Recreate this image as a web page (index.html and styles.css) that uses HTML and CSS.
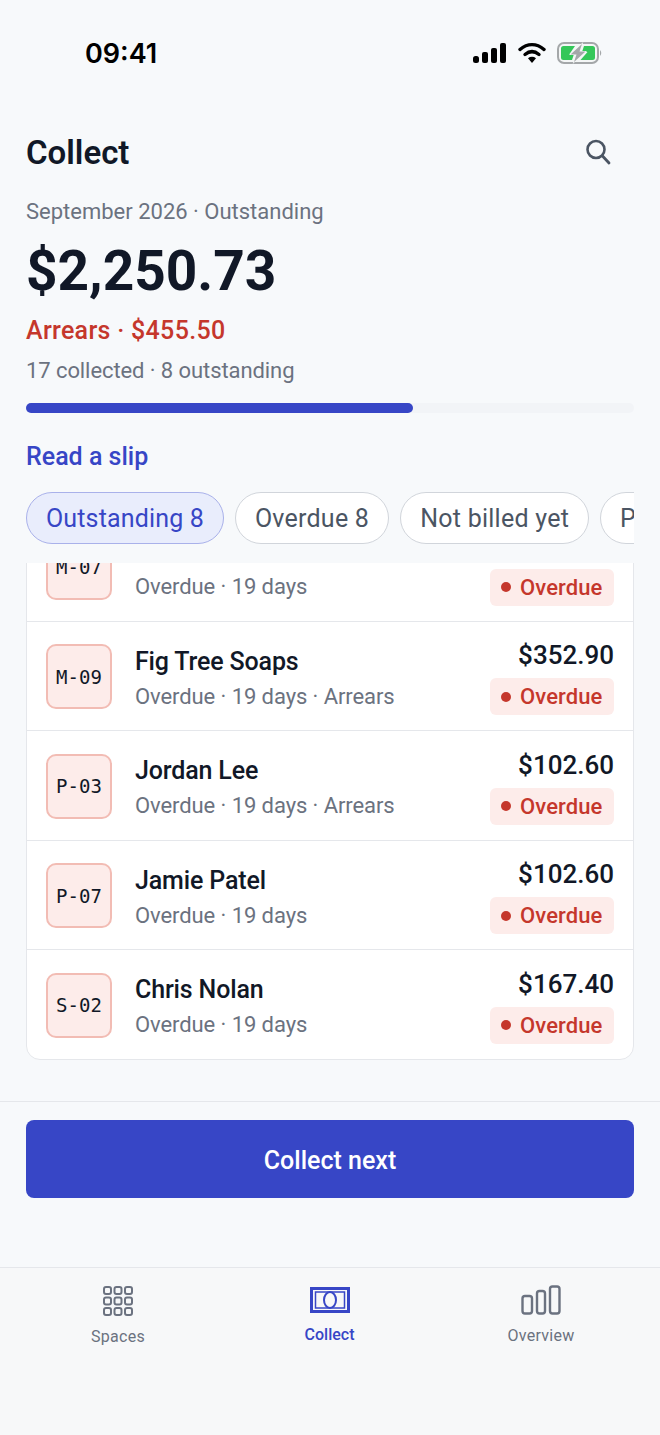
FILE: index.html

```html
<!DOCTYPE html>
<html lang="en">
<head>
    <meta charset="UTF-8">
    <meta name="viewport" content="width=device-width, initial-scale=1.0">
    <title>Collect</title>
    <link rel="stylesheet" href="styles.css">
</head>
<body>
<div class="screen">
    <div class="status">
        <span class="time">09:41</span>
        <div class="status-icons">
            <svg width="34" height="20" viewBox="0 0 34 20"><rect x="0" y="13" width="6" height="7" rx="2.5" fill="#000"/><rect x="9" y="9" width="6" height="11" rx="2" fill="#000"/><rect x="18" y="5" width="6" height="15" rx="2" fill="#000"/><rect x="27" y="0" width="6" height="20" rx="2" fill="#000"/></svg>
            <svg width="28" height="22" viewBox="0 0 28 22"><path d="M2 7.5C9.500 1 18.500 1 26 7.500" fill="none" stroke="#000" stroke-width="3.400" stroke-linecap="round"/><path d="M7 12.500C11.500 8.800 16.500 8.800 21 12.500" fill="none" stroke="#000" stroke-width="3.400" stroke-linecap="round"/><path d="M10 16.200L14 21 18 16.200C15.500 14.400 12.500 14.400 10 16.200Z" fill="#000"/></svg>
            <svg width="46" height="22" viewBox="0 0 46 22"><rect x="1" y="1" width="40" height="20" rx="6" fill="#f4f6f6" stroke="#a4a7a9" stroke-width="2"/><path d="M4 6.500Q4 4 6.500 4H18L12.500 12H17L15 18H6.500Q4 18 4 15.500Z" fill="#34c759"/><path d="M38 6.500Q38 4 35.500 4H27L25 10H30.500L23.500 18H35.500Q38 18 38 15.500Z" fill="#34c759"/><path d="M25 2L13.500 12.500H19.500L17 20L28.500 9.500H22.500Z" fill="#a4a7a9" stroke="#f4f6f6" stroke-width="1.200" paint-order="stroke"/><path d="M43 8Q45.500 11 43 14Z" fill="#a4a7a9"/></svg>
        </div>
    </div>

    <header class="head">
        <div class="title-row">
            <h1>Collect</h1>
            <svg class="search" width="28" height="28" viewBox="0 0 28 28"><circle cx="12" cy="11.500" r="8.500" fill="none" stroke="#4b5563" stroke-width="2.600"/><path d="M18.500 18L25 25" stroke="#4b5563" stroke-width="2.800" stroke-linecap="round"/></svg>
        </div>
        <p class="period">September 2026 · Outstanding</p>
        <p class="total">$2,250.73</p>
        <p class="arrears">Arrears · $455.50</p>
        <p class="counts">17 collected · 8 outstanding</p>
        <div class="progress"><div class="progress-fill" style="width: 63.7%"></div></div>
        <a class="slip-link">Read a slip</a>
        <div class="filters">
            <span class="filter active">Outstanding 8</span>
            <span class="filter">Overdue 8</span>
            <span class="filter">Not billed yet</span>
            <span class="filter">Paid 17</span>
        </div>
    </header>

    <div class="list-wrap">
        <div class="card">
            <div class="row">
                <div class="code"><span>M-07</span></div>
                <div class="info"><div class="name"></div><div class="sub">Overdue · 19 days</div></div>
                <div class="right"><div class="amount"></div><div class="badge"><i></i>Overdue</div></div>
            </div>
            <div class="row">
                <div class="code"><span>M-09</span></div>
                <div class="info"><div class="name">Fig Tree Soaps</div><div class="sub">Overdue · 19 days · Arrears</div></div>
                <div class="right"><div class="amount">$352.90</div><div class="badge"><i></i>Overdue</div></div>
            </div>
            <div class="row">
                <div class="code"><span>P-03</span></div>
                <div class="info"><div class="name">Jordan Lee</div><div class="sub">Overdue · 19 days · Arrears</div></div>
                <div class="right"><div class="amount">$102.60</div><div class="badge"><i></i>Overdue</div></div>
            </div>
            <div class="row">
                <div class="code"><span>P-07</span></div>
                <div class="info"><div class="name">Jamie Patel</div><div class="sub">Overdue · 19 days</div></div>
                <div class="right"><div class="amount">$102.60</div><div class="badge"><i></i>Overdue</div></div>
            </div>
            <div class="row">
                <div class="code"><span>S-02</span></div>
                <div class="info"><div class="name">Chris Nolan</div><div class="sub">Overdue · 19 days</div></div>
                <div class="right"><div class="amount">$167.40</div><div class="badge"><i></i>Overdue</div></div>
            </div>
        </div>
    </div>

    <div class="action">
        <button class="collect-btn">Collect next</button>
    </div>

    <nav class="tabs">
        <div class="tab">
            <svg width="32" height="32" viewBox="0 0 32 32" fill="none" stroke="#6b7280" stroke-width="2"><rect x="2" y="2" width="7" height="7" rx="2"/><rect x="12.500" y="2" width="7" height="7" rx="2"/><rect x="23" y="2" width="7" height="7" rx="2"/><rect x="2" y="12.500" width="7" height="7" rx="2"/><rect x="12.500" y="12.500" width="7" height="7" rx="2"/><rect x="23" y="12.500" width="7" height="7" rx="2"/><rect x="2" y="23" width="7" height="7" rx="2"/><rect x="12.500" y="23" width="7" height="7" rx="2"/><rect x="23" y="23" width="7" height="7" rx="2"/></svg>
            <span>Spaces</span>
        </div>
        <div class="tab current">
            <svg width="40" height="26" viewBox="0 0 40 26" fill="none" stroke="#3746c6"><rect x="1.500" y="1.500" width="37" height="23" stroke-width="3"/><rect x="5.500" y="5" width="29" height="16" stroke-width="1.500"/><ellipse cx="20" cy="13" rx="6" ry="8" stroke-width="2"/></svg>
            <span>Collect</span>
        </div>
        <div class="tab">
            <svg width="40" height="31" viewBox="0 0 40 31" fill="none" stroke="#6b7280" stroke-width="2.400"><rect x="1.500" y="11" width="9.500" height="17.500" rx="2.500"/><rect x="16" y="6" width="8" height="22.500" rx="2.500"/><rect x="29" y="1.500" width="9.500" height="27" rx="2.500"/></svg>
            <span>Overview</span>
        </div>
    </nav>
</div>
</body>
</html>
```

FILE: styles.css

```css
* {
    box-sizing: border-box;
}

html, body {
    margin: 0;
    padding: 0;
}

body {
    font-family: Roboto, "Liberation Sans", sans-serif;
    background-color: #f7f9fb;
    color: #111827;
}

.screen {
    width: 660px;
    height: 1435px;
    overflow: hidden;
    display: flex;
    flex-direction: column;
}

/* status bar */
.status {
    height: 106px;
    flex: none;
    padding: 38px 57px 0 85px;
    display: flex;
    justify-content: space-between;
    align-items: flex-start;
}

.time {
    font-family: Inter, sans-serif;
    font-size: 27px;
    font-weight: 600;
    line-height: 32px;
    color: #000;
}

.status-icons {
    display: flex;
    align-items: center;
    gap: 11px;
    padding-top: 4px;
}

/* header */
.head {
    flex: none;
    padding: 0 26px;
}

.title-row {
    display: flex;
    justify-content: space-between;
    align-items: center;
    height: 92px;
    padding-right: 22px;
}

h1 {
    margin: 0;
    font-size: 33px;
    font-weight: 600;
    color: #111827;
}

.head p {
    margin: 0;
}

.period {
    font-size: 22px;
    line-height: 28px;
    color: #6b7280;
}

.head .total {
    font-size: 55px;
    font-weight: 700;
    line-height: 64px;
    margin-top: 13px;
}

.head .arrears {
    font-size: 25px;
    font-weight: 500;
    line-height: 30px;
    letter-spacing: 0.3px;
    color: #c5372c;
    margin-top: 13px;
}

.head .counts {
    font-size: 22px;
    line-height: 28px;
    letter-spacing: -0.08px;
    color: #6b7280;
    margin-top: 11px;
}

.progress {
    height: 10px;
    border-radius: 5px;
    background-color: #f2f4f7;
    margin-top: 18px;
}

.progress-fill {
    height: 100%;
    border-radius: 5px;
    background-color: #3746c6;
}

.slip-link {
    display: block;
    font-size: 25px;
    font-weight: 500;
    line-height: 30px;
    color: #3746c6;
    margin-top: 29px;
}

.filters {
    display: flex;
    gap: 11px;
    overflow: hidden;
    margin-top: 20px;
}

.filter {
    flex: none;
    height: 52px;
    line-height: 51px;
    padding: 0 19px;
    border: 1.500px solid #d1d5db;
    border-radius: 26px;
    background-color: #fff;
    font-size: 25px;
    color: #4b5563;
    letter-spacing: 0.25px;
}

.filter.active {
    background-color: #e9edfc;
    border-color: #a9b1ea;
    color: #3746c6;
    letter-spacing: 0.15px;
}

/* list */
.list-wrap {
    flex: none;
    height: 538px;
    margin: 19px 26px 0;
    overflow: hidden;
}

.card {
    margin-top: -52px;
    background-color: #fff;
    border: 1.500px solid #e5e7eb;
    border-radius: 14px;
}

.row {
    height: 109.500px;
    padding: 1.500px 19px 0;
    display: flex;
    align-items: center;
    border-bottom: 1.500px solid #e5e7eb;
}

.row:last-child {
    height: 108.500px;
    border-bottom: none;
}

.code {
    width: 66px;
    height: 65px;
    flex: none;
    display: flex;
    align-items: center;
    justify-content: center;
    border: 2px solid #f2bcb4;
    border-radius: 10px;
    background-color: #fdecea;
    font-family: "DejaVu Sans Mono", "Liberation Mono", monospace;
    font-size: 19px;
    color: #111827;
}

.info {
    flex: 1;
    margin-left: 23px;
    padding-top: 3px;
}

.name {
    font-size: 25px;
    font-weight: 500;
    line-height: 32px;
    min-height: 32px;
    letter-spacing: -0.15px;
}

.sub {
    font-size: 22px;
    line-height: 28px;
    letter-spacing: -0.08px;
    margin-top: 5px;
    color: #6b7280;
}

.right {
    display: flex;
    flex-direction: column;
    align-items: flex-end;
    gap: 7px;
}

.amount {
    font-size: 26px;
    font-weight: 500;
    line-height: 32px;
    min-height: 33px;
    padding-top: 1px;
}

.badge {
    height: 37px;
    width: 124px;
    display: flex;
    align-items: center;
    gap: 9px;
    padding-left: 11px;
    border-radius: 6px;
    background-color: #fdecea;
    font-size: 22px;
    font-weight: 500;
    letter-spacing: 0.1px;
    color: #c5372c;
}

.badge i {
    width: 10px;
    height: 10px;
    border-radius: 50%;
    background-color: #c5372c;
}

/* bottom button */
.action {
    flex: none;
    padding: 18px 26px 0;
    border-top: 1.500px solid #e5e7eb;
    height: 166px;
}

.collect-btn {
    display: block;
    width: 100%;
    height: 78px;
    padding: 2px 0 0;
    border: none;
    border-radius: 8px;
    background-color: #3746c6;
    color: #fff;
    font-family: inherit;
    font-size: 25px;
    font-weight: 500;
}

/* tab bar */
.tabs {
    flex: 1;
    display: flex;
    justify-content: space-between;
    padding: 17px 77px 0 76px;
    background-color: #f7f8f9;
    border-top: 1.500px solid #e5e7eb;
}

.tab {
    width: 84px;
    display: flex;
    flex-direction: column;
    align-items: center;
    gap: 10px;
    font-size: 16px;
    letter-spacing: 0.25px;
    color: #6b7280;
}

.tab.current {
    padding-top: 2px;
    gap: 12px;
    font-weight: 500;
    letter-spacing: 0;
    color: #3746c6;
}
```
